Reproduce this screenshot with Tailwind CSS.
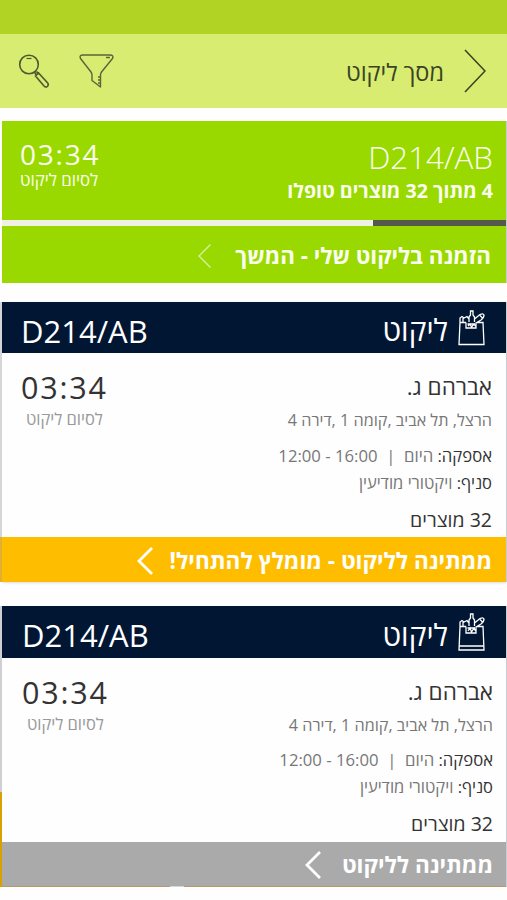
<!DOCTYPE html>
<html lang="he" dir="rtl">
<head>
  <meta charset="UTF-8">
  <meta name="viewport" content="width=device-width, initial-scale=1.0">
  <title>מסך ליקוט</title>
  <script src="https://cdn.jsdelivr.net/npm/@tailwindcss/browser@4"></script>
</head>
<body class="bg-[#fefefe] font-['Open_Sans','Noto_Sans',sans-serif] text-[#333] h-[900px] overflow-hidden whitespace-nowrap">

  <!-- Status bar -->
  <div class="h-[34px] bg-[#b1d424]"></div>

  <!-- Header -->
  <header class="h-[74px] bg-[#d8ec72] flex items-center justify-between pr-[21px] pl-[18px]">
    <div class="flex items-center gap-5">
      <svg class="w-[22px] h-[44px]" viewBox="0 0 22 44" fill="none" stroke="#3b4422" stroke-width="1.6"><path d="M1 1 21 22 1 43"/></svg>
      <h1 class="text-[23.5px] leading-8 pt-[2px] text-[#3b4422]">מסך ליקוט</h1>
    </div>
    <div class="flex items-center gap-[29px]">
      <svg class="w-[35px] h-[34px]" viewBox="0 0 35 34" fill="none" stroke="#59643a" stroke-width="1.4" stroke-linejoin="round"><path d="M4 1H31Q35 1 33.500 4.500L22.500 18Q21.500 19.500 21.500 21V33L13 26.500V21Q13 19.500 12 18L1.500 4.500Q0 1 4 1ZM27 3.500H31M19 29H21M19 26H21M19 23H21"/></svg>
      <svg class="w-[32px] h-[34px]" viewBox="0 0 32 34" fill="none" stroke="#4d5930" stroke-width="1.6"><circle cx="11" cy="10.500" r="9.300"/><path stroke-width="1.2" d="M8.500 4.500H13.500"/><path d="M16.500 18 18.500 21.500M18.500 17.500 20.500 20M17.500 22 26 32Q28 34 29.500 32.300 31 30.500 29.500 28.800L20.500 19Z"/></svg>
    </div>
  </header>

  <main class="mt-[13px] ml-[2px]">

    <!-- Active order -->
    <section class="h-[162px] bg-[#99d900] text-[#fbfff0] border-r border-[#c9ccd1]">
      <div class="h-[99px] flex justify-between pr-[13px] pl-[18px] pt-[18px]">
        <div>
          <p dir="ltr" class="text-[31.3px] leading-9 font-[350] text-right">D214/AB</p>
          <p class="text-[19.6px] leading-8 font-bold">4 מתוך 32 מוצרים טופלו</p>
        </div>
        <div class="text-left">
          <p class="text-[28px] leading-[30px] tracking-[1.8px] -mr-[2px]">03:34</p>
          <p class="text-[16.8px] leading-[22px]">לסיום ליקוט</p>
        </div>
      </div>
      <div class="h-[6px] bg-[#f0f0e4]"><div class="h-full w-[133px] bg-[#57584d]"></div></div>
      <div class="h-[57px] flex items-center pr-[15px] gap-[24px]">
        <span class="text-[22.4px] leading-8 pt-[2px] font-bold">הזמנה בליקוט שלי - המשך</span>
        <svg class="w-[13px] h-[24px] mt-[2px]" viewBox="0 0 13 24" fill="none" stroke="#d9efaa" stroke-width="1.300"><path d="M12.500 .5 1 12 12.500 23.500"/></svg>
      </div>
    </section>

    <!-- Waiting order, recommended -->
    <section class="mt-[19px] h-[280px] border-r border-[#c9ccd1] shadow-sm relative">
      <div class="h-[51px] bg-[#001633] text-white flex items-center justify-between pr-[21px] pl-[19px]">
        <div class="flex items-center gap-[10px]">
          <svg class="w-[27px] h-[36px]" viewBox="0 0 27 36" fill="none" stroke="#fff" stroke-width="1.300"><path d="M8 12.500H2L1 34.500H26L25 12.500H19M2 12V8L4 6.500 6 8 9 6.500 11 9M5 8V12M8 12.500V18H18V12.500M9.500 14H17M11 12V7L12.500 5V1H15V5L16.500 7V12M16.500 9 22 4.500Q25 3 26 5 26 8 23 10L18 13M22 5.500 24.500 8M10 16 12 14 13.500 17 16 14 17.500 16"/></svg>
          <h2 class="text-[29.8px] leading-9 pt-[5px]">ליקוט</h2>
        </div>
        <span dir="ltr" class="text-[31px] leading-9 pt-[6px]">D214/AB</span>
      </div>
      <div class="h-[184px] flex justify-between pr-[14px] pl-[19px] pt-[17px] text-[#777]">
        <div>
          <p class="text-[22.5px] leading-[34px] text-[#333]">אברהם ג.</p>
          <p class="text-[16.2px] leading-8">הרצל, תל אביב ,קומה 1 ,דירה 4</p>
          <p class="mt-[7px] text-[16.7px] leading-[26px]"><span class="text-[#333]">אספקה:</span> היום&nbsp; |&nbsp; <span dir="ltr">12:00 - 16:00</span></p>
          <p class="text-[16.5px] leading-[27px]"><span class="text-[#333]">סניף:</span> ויקטורי מודיעין</p>
          <p class="mt-[7px] text-[19.5px] leading-[34px] text-[#333]">32 מוצרים</p>
        </div>
        <div class="text-center">
          <p class="text-[30.5px] leading-[34px] tracking-[1.8px] text-[#333]">03:34</p>
          <p class="text-[16.5px] leading-[30px] text-[#999]">לסיום ליקוט</p>
        </div>
      </div>
      <div class="h-[45px] bg-[#ffbd00] text-white flex items-center pr-[14px] gap-[17px]">
        <span class="text-[22.6px] leading-8 pt-[2px] font-bold">ממתינה לליקוט - מומלץ להתחיל!</span>
        <svg class="w-[16px] h-[28px] mt-[2px]" viewBox="0 0 16 28" fill="none" stroke="#fff" stroke-width="2.800"><path d="M15 1 2 14 15 27"/></svg>
      </div>
      <div class="absolute top-0 -left-[2px] w-[2px] h-[235px] bg-[#d3d5d8]"></div>
      <div class="absolute bottom-0 -left-[2px] w-[2px] h-[45px] bg-[#e0b030]"></div>
    </section>

    <!-- Waiting order -->
    <section class="mt-[24px] h-[281px] border-r border-[#c9ccd1] relative">
      <div class="h-[52px] bg-[#001633] text-white flex items-center justify-between pr-[21px] pl-[20px]">
        <div class="flex items-center gap-[10px]">
          <svg class="w-[27px] h-[38px]" viewBox="0 0 27 38" fill="none" stroke="#fff" stroke-width="1.300"><path d="M8 13.500H2L1 37H26L25 13.500H19M1.500 33H25.500M2 13V9L4 7.500 6 9 9 7.500 11 10M5 9V13M8 13.500V20H18V13.500M9.500 15H17M11 13V7L12.500 5V1H15V5L16.500 7V13M16.500 10 22 5.500Q25 4 26 6 26 9 23 11L18 14M22 6.500 24.500 9M10 18 12 15 13.500 19 16 15 17.500 18"/></svg>
          <h2 class="text-[29.8px] leading-9 pt-[5px]">ליקוט</h2>
        </div>
        <span dir="ltr" class="text-[31px] leading-9 pt-[6px]">D214/AB</span>
      </div>
      <div class="h-[184px] flex justify-between pr-[13px] pl-[20px] pt-[17px] text-[#777]">
        <div>
          <p class="text-[22.5px] leading-[34px] text-[#333]">אברהם ג.</p>
          <p class="text-[16.2px] leading-8">הרצל, תל אביב ,קומה 1 ,דירה 4</p>
          <p class="mt-[6px] text-[16.7px] leading-[26px]"><span class="text-[#333]">אספקה:</span> היום&nbsp; |&nbsp; <span dir="ltr">12:00 - 16:00</span></p>
          <p class="text-[16.5px] leading-[27px]"><span class="text-[#333]">סניף:</span> ויקטורי מודיעין</p>
          <p class="mt-[7px] text-[19.5px] leading-[34px] text-[#333]">32 מוצרים</p>
        </div>
        <div class="text-center">
          <p class="text-[30.5px] leading-[34px] tracking-[1.8px] text-[#333]">03:34</p>
          <p class="text-[16.5px] leading-[30px] text-[#999]">לסיום ליקוט</p>
        </div>
      </div>
      <div class="h-[45px] bg-[#aaa] border-b border-[#b69a66] text-white flex items-center pr-[13px] gap-[21px]">
        <span class="text-[22.6px] leading-8 pt-[2px] font-bold">ממתינה לליקוט</span>
        <svg class="w-[16px] h-[28px] mt-[2px]" viewBox="0 0 16 28" fill="none" stroke="#fff" stroke-width="2.800"><path d="M15 1 2 14 15 27"/></svg>
      </div>
      <!-- left edge of the card underneath -->
      <div class="absolute top-0 -left-[2px] w-[2px] h-[186px] bg-[#cfcfd3]"></div>
      <div class="absolute bottom-0 -left-[2px] w-[2px] h-[95px] bg-[#d9a000]"></div>
      <!-- home indicator tip -->
      <div class="absolute bottom-0 left-[168px] w-[14px] h-px bg-[#d5d5e0]"></div>
    </section>
  </main>

</body>
</html>
